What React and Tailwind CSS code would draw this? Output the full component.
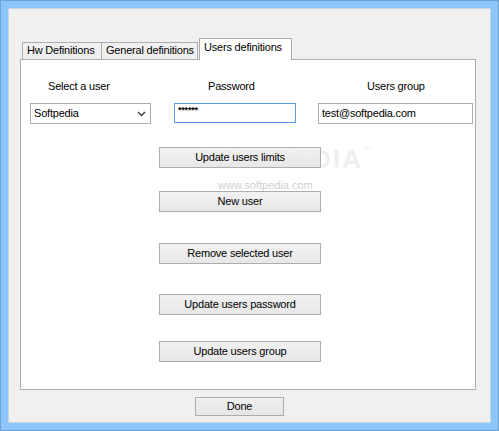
import React from 'react';

const font = { fontFamily: '"Liberation Sans", Arial, sans-serif' };

const WinButton = ({ label, className = '' }) => (
  <button
    className={`relative z-10 h-[21px] w-[162px] border border-[#adadad] bg-gradient-to-b from-[#f0f0f0]/90 to-[#e5e5e5]/90 text-[11px] tracking-[-0.2px] text-black leading-none ${className}`}
  >
    {label}
  </button>
);

const App = () => {
  return (
    <div className="w-[499px] h-[431px] bg-[#8cc5f7] border border-[#6fa3d6] p-[7px]" style={font}>
      <div className="w-[483px] h-[415px] bg-[#f0f0f0] border border-[#c8d6e4] pl-[11px] pt-[29px]">
        {/* Tabs */}
        <div className="flex items-end h-[21px] pl-[2px] text-[11px] tracking-[-0.2px] whitespace-nowrap">
          <div className="h-[17px] w-[80px] border border-b-0 border-[#adadad] bg-[#f0f0f0] leading-[15px] pl-[4px] text-black">
            Hw Definitions
          </div>
          <div className="h-[17px] w-[96px] border border-b-0 border-l-0 border-[#adadad] bg-[#f0f0f0] leading-[15px] pl-[4px] text-black">
            General definitions
          </div>
          <div className="relative z-10 -mb-px ml-[1px] h-[22px] w-[93px] border border-b-0 border-[#adadad] bg-white leading-[15px] pl-[4px] pt-[1px] text-black">
            Users definitions
          </div>
        </div>

        {/* Panel */}
        <div className="relative w-[456px] h-[331px] border border-[#adadad] bg-white pt-[19px] pl-[9px]">
          <div className="flex text-[11px] tracking-[-0.2px] text-black">
            <div className="w-[121px]">
              <div className="pl-[18px] h-[14px] leading-[14px]">Select a user</div>
              <div className="mt-[10px] h-[21px] border border-[#acacac] flex items-center justify-between pl-[3px] pr-[4px]">
                <span>Softpedia</span>
                <svg width="9" height="6" viewBox="0 0 9 6">
                  <path d="M1 1 L4.5 4.5 L8 1" fill="none" stroke="#333" strokeWidth="1.3" />
                </svg>
              </div>
            </div>
            <div className="w-[122px] ml-[23px]">
              <div className="pl-[34px] h-[14px] leading-[14px]">Password</div>
              <div className="mt-[10px] h-[20px] border border-[#569de5] pl-[3px] text-[9px] leading-[12px] font-bold">
                ******
              </div>
            </div>
            <div className="w-[155px] ml-[22px]">
              <div className="pl-[49px] h-[14px] leading-[14px]">Users group</div>
              <div className="mt-[10px] h-[21px] border border-[#acacac] flex items-center pl-[3px]">
                test@softpedia.com
              </div>
            </div>
          </div>

          <div className="flex flex-col ml-[129px]">
            <WinButton label="Update users limits" className="mt-[23px]" />
            <WinButton label="New user" className="mt-[23px]" />
            <WinButton label="Remove selected user" className="mt-[31px]" />
            <WinButton label="Update users password" className="mt-[30px]" />
            <WinButton label="Update users group" className="mt-[26px]" />
          </div>

          {/* watermark */}
          <div className="pointer-events-none absolute z-0 left-[175px] top-[86px] text-[26px] font-bold tracking-[2px] text-[#000] opacity-[0.06] leading-none">
            SOFTPEDIA<span className="text-[8px] align-top">™</span>
          </div>
          <div className="pointer-events-none absolute left-[197px] top-[120px] text-[11px] text-[#cfcfcf] leading-none">
            www.softpedia.com
          </div>
        </div>

        <button className="mt-[7px] ml-[175px] h-[19px] w-[89px] border border-[#adadad] bg-gradient-to-b from-[#f0f0f0] to-[#e5e5e5] text-[11px] tracking-[-0.2px] text-black leading-none">
          Done
        </button>
      </div>
    </div>
  );
};

export default App;
